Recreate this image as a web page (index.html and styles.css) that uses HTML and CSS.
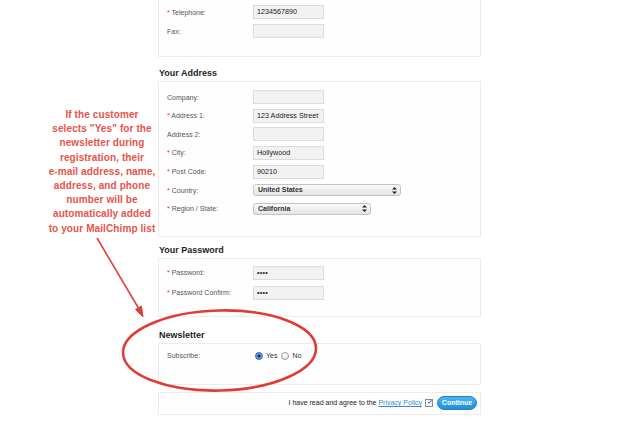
FILE: index.html
```html
<!DOCTYPE html>
<html>
<head>
<meta charset="utf-8">
<link rel="stylesheet" href="styles.css">
</head>
<body>
<div class="page">
  <div class="form">
    <div class="box box-phone">
      <div class="rows gap5">
        <div class="row"><span class="label"><i>*</i> Telephone:</span><span class="input">1234567890</span></div>
        <div class="row"><span class="label">Fax:</span><span class="input"></span></div>
      </div>
    </div>

    <h2 class="heading h-address">Your Address</h2>
    <div class="box box-address">
      <div class="rows gapaddr">
        <div class="row"><span class="label">Company:</span><span class="input"></span></div>
        <div class="row"><span class="label"><i>*</i> Address 1:</span><span class="input">123 Address Street</span></div>
        <div class="row"><span class="label">Address 2:</span><span class="input"></span></div>
        <div class="row"><span class="label"><i>*</i> City:</span><span class="input">Hollywood</span></div>
        <div class="row"><span class="label"><i>*</i> Post Code:</span><span class="input">90210</span></div>
        <div class="row"><span class="label"><i>*</i> Country:</span><span class="select select-wide">United States<svg class="updown" width="5" height="7" viewBox="0 0 5 7"><path d="M2.5 0 L5 2.6 H0 Z M2.5 7 L5 4.4 H0 Z" fill="#222"/></svg></span></div>
        <div class="row"><span class="label"><i>*</i> Region / State:</span><span class="select select-mid">California<svg class="updown" width="5" height="7" viewBox="0 0 5 7"><path d="M2.5 0 L5 2.6 H0 Z M2.5 7 L5 4.4 H0 Z" fill="#222"/></svg></span></div>
      </div>
    </div>

    <h2 class="heading h-password">Your Password</h2>
    <div class="box box-password">
      <div class="rows gap6">
        <div class="row"><span class="label"><i>*</i> Password:</span><span class="input dots">••••</span></div>
        <div class="row"><span class="label"><i>*</i> Password Confirm:</span><span class="input dots">••••</span></div>
      </div>
    </div>

    <h2 class="heading h-news">Newsletter</h2>
    <div class="box box-news">
      <div class="row row-short">
        <span class="label">Subscribe:</span>
        <span class="radio on"></span><span class="opt">Yes</span>
        <span class="radio"></span><span class="opt">No</span>
      </div>
    </div>

    <div class="box box-agree">
      <div class="agree">
        <span class="agree-text">I have read and agree to the <a class="link">Privacy Policy</a></span>
        <span class="check"><svg width="8" height="8" viewBox="0 0 8 8"><path d="M1.5 4 L3.3 6 L7.5 0.5" fill="none" stroke="#2d5fa8" stroke-width="1.6"/></svg></span>
        <span class="btn">Continue</span>
      </div>
    </div>
  </div>

  <div class="note">If the customer<br>selects "Yes" for the<br>newsletter during<br>registration, their<br>e-mail address, name,<br>address, and phone<br>number will be<br>automatically added<br>to your MailChimp list</div>

  <svg class="overlay" width="640" height="426" viewBox="0 0 640 426">
    <line x1="97" y1="238" x2="139" y2="309" stroke="#e0403a" stroke-width="1.6"/>
    <path d="M143 317 L135.5 309.5 L141.5 306 Z" fill="#e0403a" stroke="#e0403a" stroke-width="1"/>
    <ellipse cx="219.5" cy="350.5" rx="96.5" ry="40" fill="none" stroke="#e23b36" stroke-width="2.6" transform="rotate(-1.5 219.5 350.5)"/>
  </svg>
</div>
</body>
</html>
```

FILE: styles.css
```css
html, body {
  margin: 0;
  padding: 0;
  background: #ffffff;
}

body {
  font-family: "Liberation Sans", Arial, sans-serif;
  width: 640px;
  height: 426px;
  overflow: hidden;
}

.page {
  position: relative;
  width: 640px;
  height: 426px;
  overflow: hidden;
}

.form {
  margin-left: 158px;
  width: 323px;
}

.box {
  border: 1px solid #ececec;
  background: #fefefe;
  padding-left: 8px;
  padding-right: 3px;
}

.box-phone {
  margin-top: -4px;
  padding-top: 8px;
  padding-bottom: 18px;
}

.box-address {
  padding-top: 8px;
  padding-bottom: 20px;
}

.box-password {
  padding-top: 7px;
  padding-bottom: 16px;
}

.box-news {
  padding-top: 6px;
  padding-bottom: 22px;
}

.box-agree {
  margin-top: 7px;
  padding-top: 2px;
  padding-bottom: 3px;
}

.heading {
  margin: 0;
  font-size: 9px;
  line-height: 16px;
  height: 16px;
  font-weight: bold;
  color: #1e1e1e;
  padding-left: 1px;
}

.h-address { margin-top: 8px; }
.h-password { margin-top: 5px; }
.h-news { margin-top: 10px; }

.rows {
  display: flex;
  flex-direction: column;
}

.gap5 { gap: 5px; }
.gap6 { gap: 6px; }
.gapaddr { gap: 4.67px; }

.row {
  display: flex;
  align-items: center;
  height: 14px;
}

.row-short {
  height: 12px;
}

.label {
  width: 86px;
  flex: none;
  font-size: 7px;
  color: #555555;
  white-space: nowrap;
}

.label i {
  font-style: normal;
  color: #e0342c;
}

.input {
  box-sizing: border-box;
  width: 71px;
  height: 14px;
  border: 1px solid #dcdcdc;
  background: #f2f2f2;
  font-size: 7.2px;
  line-height: 12px;
  padding-left: 3px;
  color: #1a1a1a;
  white-space: nowrap;
  overflow: hidden;
}

.dots {
  font-size: 7px;
  letter-spacing: 0.3px;
}

.select {
  box-sizing: border-box;
  height: 12px;
  border: 1px solid #c4c4c4;
  border-radius: 3px;
  background: linear-gradient(#fafafa, #e4e4e4);
  font-size: 7px;
  font-weight: bold;
  color: #333333;
  line-height: 10px;
  padding-left: 4px;
  display: flex;
  align-items: center;
  justify-content: space-between;
  padding-right: 3px;
}

.select-wide { width: 148px; }
.select-mid { width: 118px; }

.updown {
  display: block;
}

.radio {
  box-sizing: border-box;
  width: 8px;
  height: 8px;
  border-radius: 50%;
  border: 1px solid #9a9a9a;
  background: linear-gradient(#ffffff, #e8e8e8);
  margin-left: 2px;
  flex: none;
}

.radio.on {
  border-color: #3a6fb5;
  background: radial-gradient(circle, #1b2f55 0 1.3px, #6ea7e6 1.8px, #3f7fcf 100%);
}

.opt {
  font-size: 7px;
  color: #333;
  margin-left: 3px;
  margin-right: 2px;
}

.agree {
  display: flex;
  align-items: center;
  justify-content: flex-end;
  height: 16px;
}

.agree-text {
  font-size: 7px;
  color: #222;
  white-space: nowrap;
}

.link {
  color: #3a86d1;
  text-decoration: underline;
}

.check {
  box-sizing: border-box;
  width: 8px;
  height: 8px;
  border: 1px solid #8a8a8a;
  background: #fff;
  margin-left: 3px;
  display: flex;
  align-items: center;
  justify-content: center;
  overflow: visible;
}

.check svg {
  display: block;
  margin-top: -1px;
  margin-left: 1px;
}

.btn {
  margin-left: 4px;
  width: 40px;
  height: 14px;
  border-radius: 7px;
  background: linear-gradient(#4cb6ef, #1f8fd6);
  border: 1px solid #1b82c6;
  box-sizing: border-box;
  color: #ffffff;
  font-size: 7px;
  font-weight: bold;
  line-height: 12px;
  text-align: center;
}

.note {
  position: absolute;
  left: 42px;
  top: 108px;
  width: 120px;
  text-align: center;
  font-size: 10px;
  line-height: 14.2px;
  font-weight: bold;
  letter-spacing: 0.1px;
  color: #e4544b;
  white-space: nowrap;
}

.overlay {
  position: absolute;
  left: 0;
  top: 0;
  pointer-events: none;
}
```
